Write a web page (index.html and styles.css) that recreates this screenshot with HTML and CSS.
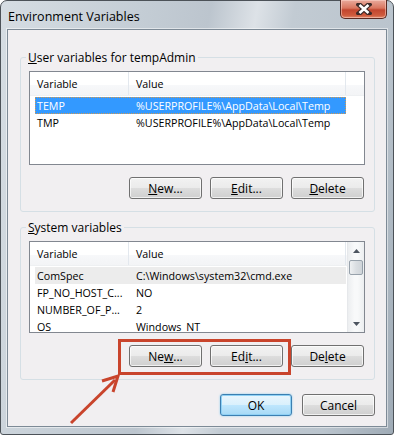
FILE: index.html
```html
<!DOCTYPE html>
<html lang="en">

<head>
    <meta charset="UTF-8" />
    <title>Environment Variables</title>
    <link rel="stylesheet" href="styles.css">
</head>

<body>
    <div class="window">
        <div class="titlebar">
            <span class="title">Environment Variables</span>
            <div class="close-btn">
                <svg width="16" height="12" viewBox="0 0 16 12">
                    <path d="M3 1.5 L13 10.5 M13 1.5 L3 10.5" stroke="#3c2a28" stroke-width="5" stroke-linecap="square" />
                    <path d="M3.5 2 L12.5 10 M12.5 2 L3.5 10" stroke="#ffffff" stroke-width="2.6" />
                </svg>
            </div>
        </div>

        <div class="client">
            <fieldset class="group">
                <legend><u>U</u>ser variables for tempAdmin</legend>
                <div class="listview">
                    <div class="lv-main">
                        <div class="lv-head">
                            <span class="col-var">Variable</span>
                            <span class="col-val">Value</span>
                            <span class="col-rest"></span>
                        </div>
                        <div class="lv-rows">
                            <div class="lv-row selected">
                                <span class="col-var">TEMP</span>
                                <span class="col-val">%USERPROFILE%\AppData\Local\Temp</span>
                            </div>
                            <div class="lv-row">
                                <span class="col-var">TMP</span>
                                <span class="col-val">%USERPROFILE%\AppData\Local\Temp</span>
                            </div>
                        </div>
                    </div>
                </div>
                <div class="btn-row">
                    <button class="btn"><u>N</u>ew...</button>
                    <button class="btn"><u>E</u>dit...</button>
                    <button class="btn"><u>D</u>elete</button>
                </div>
            </fieldset>

            <fieldset class="group group-sys">
                <legend><u>S</u>ystem variables</legend>
                <div class="listview list-sys">
                    <div class="lv-main">
                        <div class="lv-head">
                            <span class="col-var">Variable</span>
                            <span class="col-val">Value</span>
                        </div>
                        <div class="lv-rows">
                            <div class="lv-row inactive">
                                <span class="col-var">ComSpec</span>
                                <span class="col-val">C:\Windows\system32\cmd.exe</span>
                            </div>
                            <div class="lv-row">
                                <span class="col-var">FP_NO_HOST_C...</span>
                                <span class="col-val">NO</span>
                            </div>
                            <div class="lv-row">
                                <span class="col-var">NUMBER_OF_P...</span>
                                <span class="col-val">2</span>
                            </div>
                            <div class="lv-row">
                                <span class="col-var">OS</span>
                                <span class="col-val">Windows_NT</span>
                            </div>
                        </div>
                    </div>
                    <div class="scrollbar">
                        <div class="sb-arrow">
                            <svg width="7" height="4" viewBox="0 0 7 4"><path d="M0 4 L3.5 0 L7 4 Z" fill="#4d5560" /></svg>
                        </div>
                        <div class="sb-track">
                            <div class="sb-thumb"></div>
                        </div>
                        <div class="sb-arrow">
                            <svg width="7" height="4" viewBox="0 0 7 4"><path d="M0 0 L7 0 L3.5 4 Z" fill="#4d5560" /></svg>
                        </div>
                    </div>
                </div>
                <div class="btn-row">
                    <button class="btn">Ne<u>w</u>...</button>
                    <button class="btn">Ed<u>i</u>t...</button>
                    <button class="btn">De<u>l</u>ete</button>
                </div>
            </fieldset>

            <div class="dialog-buttons">
                <button class="btn btn-default">OK</button>
                <button class="btn">Cancel</button>
            </div>
        </div>

        <!-- annotation drawn over the screenshot -->
        <div class="mark-box"></div>
        <svg class="mark-arrow" width="60" height="60" viewBox="0 0 60 60">
            <path d="M3 55 L47 12" stroke="#c9442c" stroke-width="3" />
            <path d="M34 13 L50 8 L45 24" stroke="#c9442c" stroke-width="3" fill="none" />
        </svg>
    </div>
</body>

</html>
```

FILE: styles.css
```css
:root {
    --frame: #bec8d1;
    --client-bg: #f1eff1;
    --group-border: #d5dfe5;
    --list-border: #828790;
    --select: #3399ff;
    --mark: #c9442c;
}

* {
    box-sizing: border-box;
}

body {
    margin: 0;
    background: #ffffff;
    font-family: 'Open Sans', 'Liberation Sans', sans-serif;
    font-size: 10.7px;
    color: #000;
}

.window {
    position: relative;
    width: 394px;
    height: 435px;
    border: 1px solid #4c5258;
    border-radius: 7px 7px 3px 3px;
    background: linear-gradient(100deg, #d6dde3 0%, #c4cdd5 30%, #bcc5ce 45%, #dde2e7 55%, #c2cbd3 63%, #bac4cd 85%, #9fabb6 100%);
    padding: 0 6px 7px 6px;
    display: flex;
    flex-direction: column;
}

.titlebar {
    height: 28px;
    display: flex;
    justify-content: space-between;
    align-items: flex-start;
}

.title {
    padding: 7px 0 0 1px;
    font-size: 12.5px;
    color: #000;
}

.close-btn {
    width: 47px;
    height: 19px;
    margin-top: -1px;
    border: 1px solid #5a2a22;
    border-top: none;
    border-radius: 0 0 5px 5px;
    background: linear-gradient(#e9ab9d 0%, #d9765f 45%, #c2462f 55%, #cf5b3d 85%, #e08a6c 100%);
    box-shadow: inset 0 0 0 1px rgba(255, 220, 210, 0.5);
    display: flex;
    justify-content: center;
    align-items: center;
}

.client {
    flex: 1;
    background: var(--client-bg);
    border: 1px solid #7d8a96;
    box-shadow: 0 0 0 1px rgba(255, 255, 255, 0.5);
    padding: 20px 11px 0 12px;
}

.group {
    margin: 0;
    border: 1px solid var(--group-border);
    border-radius: 3px;
    padding: 6px 9px 12px 8px;
}

.group legend {
    padding: 0 2px;
    margin-left: -3px;
    font-size: 12px;
    line-height: 15px;
}

.group-sys {
    margin-top: 8px;
}

.listview {
    height: 94px;
    border: 1px solid var(--list-border);
    background: #fff;
    display: flex;
    overflow: hidden;
}

.list-sys {
    height: 92px;
}

.lv-main {
    flex: 1;
    min-width: 0;
}

.lv-head {
    height: 24px;
    display: flex;
    align-items: center;
    background: linear-gradient(#ffffff 0%, #ffffff 55%, #f7f8fa 56%, #f3f4f6 100%);
    border-bottom: 1px solid #eef0f2;
}

.lv-head span {
    height: 100%;
    display: flex;
    align-items: center;
    border-right: 1px solid #e3e8ee;
}

.lv-head .col-rest {
    flex: 1;
    border-right: none;
}

.col-var {
    width: 99px;
    padding-left: 7px;
    flex-shrink: 0;
    white-space: nowrap;
}

.col-val {
    width: 217px;
    padding-left: 7px;
    flex-shrink: 0;
    white-space: nowrap;
}

.lv-rows {
    padding-top: 1px;
}

.lv-row {
    height: 17px;
    width: 311px;
    margin-left: 5px;
    display: flex;
    align-items: center;
}

.lv-row .col-var {
    width: 94px;
    padding-left: 2px;
}

.lv-row .col-val {
    padding-left: 7px;
}

.lv-row.selected {
    background: var(--select);
    color: #fff;
    outline: 1px dotted #d29a52;
    outline-offset: -1px;
}

.lv-row.inactive {
    background: #ececec;
}

.scrollbar {
    width: 17px;
    display: flex;
    flex-direction: column;
    background: linear-gradient(90deg, #eceef0, #f8f9fa 40%, #f8f9fa 60%, #eceef0);
    border-left: 1px solid #e6e8eb;
}

.sb-arrow {
    height: 17px;
    display: flex;
    justify-content: center;
    align-items: center;
}

.sb-track {
    flex: 1;
}

.sb-thumb {
    height: 15px;
    margin: 1px 1px 0 1px;
    border: 1px solid #97a1ab;
    border-radius: 2px;
    background: linear-gradient(90deg, #eef0f2, #dadee2 50%, #cfd4d9);
}

.btn-row {
    display: flex;
    justify-content: flex-end;
    gap: 8px;
    margin-top: 12px;
    margin-right: 1px;
}

.btn {
    width: 73px;
    height: 22px;
    padding: 0;
    border: 1px solid #707070;
    border-radius: 3px;
    background: linear-gradient(#f2f2f2 0%, #ebebeb 50%, #dddddd 51%, #cfcfcf 100%);
    box-shadow: inset 0 0 0 1px rgba(255, 255, 255, 0.7);
    font-family: inherit;
    font-size: 12px;
    color: #000;
}

.btn u {
    text-decoration-thickness: 1px;
    text-underline-offset: 1px;
}

.dialog-buttons {
    display: flex;
    justify-content: flex-end;
    gap: 10px;
    margin-top: 14px;
}

.btn-default {
    width: 72px;
    border-color: #3c7fb1;
    background: linear-gradient(#eaf6fd 0%, #d9f0fc 50%, #bee6fd 51%, #a7d9f5 100%);
    box-shadow: inset 0 0 0 1px #8fd1f5, 0 0 2px #7fc8f0;
}

.mark-box {
    position: absolute;
    left: 117px;
    top: 338px;
    width: 173px;
    height: 36px;
    border: 3px solid var(--mark);
}

.mark-arrow {
    position: absolute;
    left: 67px;
    top: 367px;
}
```
